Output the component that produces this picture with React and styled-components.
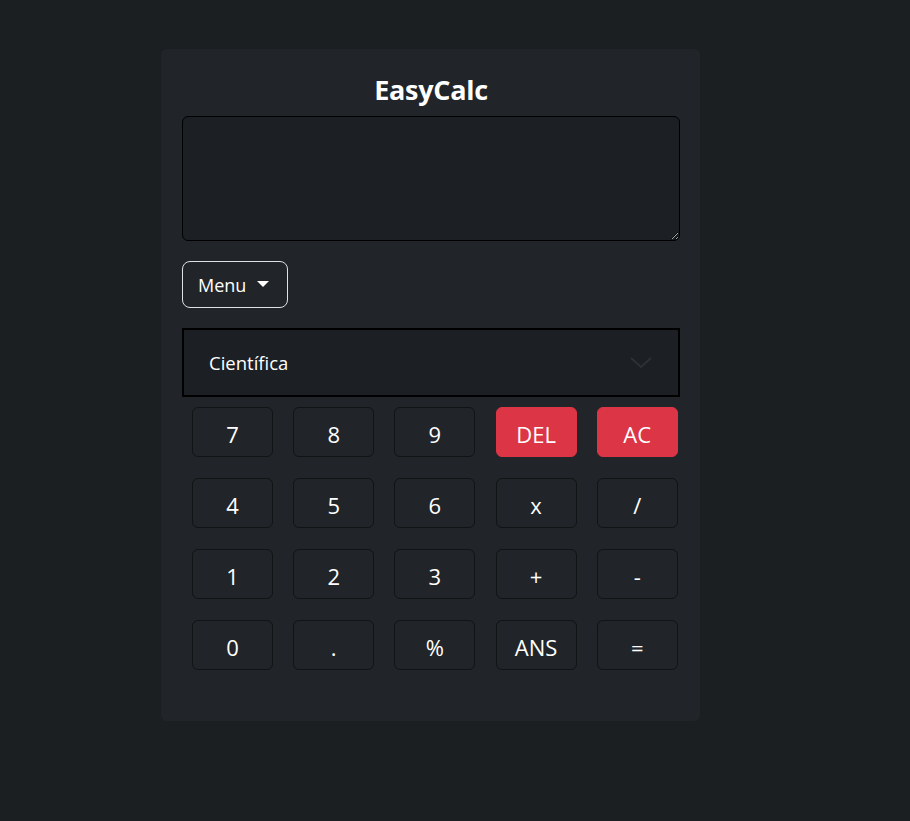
import React from 'react';
import styled, { createGlobalStyle } from 'styled-components';

const GlobalStyle = createGlobalStyle`
  html, body {
    margin: 0;
    padding: 0;
    background-color: #1c1f22;
    font-family: "Open Sans", "Noto Sans", "Liberation Sans", sans-serif;
    color: #fff;
  }
  * {
    box-sizing: border-box;
  }
`;

const Page = styled.main`
  min-height: 821px;
  padding: 49px 0 0 161px;
`;

const Card = styled.section`
  width: 539px;
  background-color: #212529;
  border-radius: 6px;
  padding: 0 20px 51px 21px;
`;

const Title = styled.h3`
  margin: 0;
  height: 67px;
  display: flex;
  align-items: center;
  justify-content: center;
  padding-top: 14px;
  font-size: 27px;
  font-weight: 700;
  letter-spacing: -0.3px;
  color: #fff;
`;

const Display = styled.textarea`
  display: block;
  width: 100%;
  height: 125px;
  margin: 0 0 20px;
  padding: 8px 12px;
  background-color: #1c1f23;
  border: 1px solid #000;
  border-radius: 6px;
  color: #fff;
  font-family: inherit;
  font-size: 16px;
  outline: none;
`;

const MenuButton = styled.button`
  display: inline-flex;
  align-items: center;
  height: 47px;
  width: 106px;
  padding: 0 0 0 15px;
  margin-bottom: 20px;
  background: transparent;
  border: 1px solid #dee2e6;
  border-radius: 8px;
  color: #fff;
  font-family: inherit;
  font-size: 18px;
  cursor: pointer;
`;

const Caret = styled.span`
  display: inline-block;
  margin-left: 11px;
  margin-top: -2px;
  border-top: 6px solid #fff;
  border-left: 6px solid transparent;
  border-right: 6px solid transparent;
`;

const Select = styled.div`
  display: flex;
  align-items: center;
  justify-content: space-between;
  height: 69px;
  padding: 0 26px 0 25px;
  margin-bottom: 10px;
  background-color: #1c1f23;
  border: 2px solid #000;
  font-size: 18.5px;
  color: #fff;
`;

const Keypad = styled.div`
  display: grid;
  grid-template-columns: repeat(5, 81px);
  column-gap: 20.2px;
  row-gap: 21px;
  padding: 0 10px;
`;

const Key = styled.button`
  height: 50px;
  padding: 4px 0 0;
  border-radius: 6px;
  border: 1px solid ${(p) => (p.$danger ? '#dc3545' : '#111315')};
  background-color: ${(p) => (p.$danger ? '#dc3545' : '#212529')};
  color: #fff;
  font-family: inherit;
  font-size: 22px;
  line-height: 1;
  cursor: pointer;
`;

const keys = [
  '7', '8', '9', 'DEL', 'AC',
  '4', '5', '6', 'x', '/',
  '1', '2', '3', '+', '-',
  '0', '.', '%', 'ANS', '=',
];

const Chevron = () => (
  <svg width="22" height="12" viewBox="0 0 22 12" fill="none">
    <polyline points="1,1 11,10 21,1" stroke="#2c3136" strokeWidth="2" />
  </svg>
);

export default function App() {
  return (
    <>
      <GlobalStyle />
      <Page>
        <Card>
          <Title>EasyCalc</Title>
          <Display />
          <MenuButton>
            Menu
            <Caret />
          </MenuButton>
          <Select>
            <span>Científica</span>
            <Chevron />
          </Select>
          <Keypad>
            {keys.map((k) => (
              <Key key={k} $danger={k === 'DEL' || k === 'AC'}>
                {k}
              </Key>
            ))}
          </Keypad>
        </Card>
      </Page>
    </>
  );
}
